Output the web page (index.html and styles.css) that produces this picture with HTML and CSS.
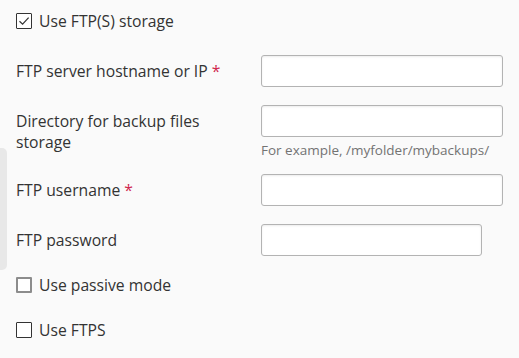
FILE: index.html
```html
<!DOCTYPE html>
<html lang="en">
<head>
    <meta charset="UTF-8">
    <title>FTP storage settings</title>
    <link rel="stylesheet" href="styles.css">
</head>
<body>
    <!-- Side handle -->
    <div class="side-handle"></div>

    <div class="settings">
        <!-- Enable FTP -->
        <label class="check-row first">
            <span class="box checked">
                <svg width="14" height="14" viewBox="0 0 14 14"><path d="M2.5 7.2 L5.6 10.2 L11.6 3.6" fill="none" stroke="#333" stroke-width="1.2"/></svg>
            </span>
            <span>Use FTP(S) storage</span>
        </label>

        <!-- Fields -->
        <div class="field">
            <label class="field-label" for="ftp-host">FTP server hostname or IP <span class="req">*</span></label>
            <div class="field-control">
                <input type="text" id="ftp-host" class="text-input">
            </div>
        </div>

        <div class="field">
            <label class="field-label" for="ftp-dir">Directory for backup files storage</label>
            <div class="field-control">
                <input type="text" id="ftp-dir" class="text-input">
                <div class="hint">For example, /myfolder/mybackups/</div>
            </div>
        </div>

        <div class="field">
            <label class="field-label" for="ftp-user">FTP username <span class="req">*</span></label>
            <div class="field-control">
                <input type="text" id="ftp-user" class="text-input">
            </div>
        </div>

        <div class="field">
            <label class="field-label" for="ftp-pass">FTP password</label>
            <div class="field-control">
                <input type="password" id="ftp-pass" class="text-input short">
            </div>
        </div>

        <!-- Options -->
        <label class="check-row passive">
            <span class="box hover"></span>
            <span>Use passive mode</span>
        </label>

        <label class="check-row ftps">
            <span class="box"></span>
            <span>Use FTPS</span>
        </label>
    </div>
</body>
</html>
```

FILE: styles.css
```css
/* General Styles */
* {
    margin: 0;
    padding: 0;
    box-sizing: border-box;
}

body {
    font-family: 'Open Sans', Arial, sans-serif;
    font-size: 15.7px;
    color: #333;
    background: #fafafa;
    width: 519px;
    height: 358px;
    overflow: hidden;
    position: relative;
}

.side-handle {
    position: absolute;
    left: 0;
    top: 148px;
    width: 7px;
    height: 122px;
    background: #e8e8e8;
    border-radius: 0 5px 5px 0;
}

.settings {
    padding: 0 16px;
}

/* Checkbox rows */
.check-row {
    display: flex;
    align-items: center;
    gap: 7px;
    height: 16px;
    line-height: 20px;
}

.check-row.first {
    margin-top: 13px;
    margin-bottom: 26px;
}

.check-row.passive {
    margin-top: 21px;
}

.check-row.ftps {
    margin-top: 29px;
}

.box {
    width: 16px;
    height: 16px;
    flex-shrink: 0;
    border: 1px solid #333;
    border-radius: 1px;
    background: #fff;
    display: flex;
    align-items: center;
    justify-content: center;
}

.box.hover {
    border: 2px solid #8c8c8c;
}

/* Fields */
.field {
    display: flex;
    align-items: flex-start;
    margin-bottom: 18px;
}

.field:nth-of-type(4) {
    margin-bottom: 0;
}

.field-label {
    width: 245px;
    padding: 6px 15px 0 0;
    line-height: 21px;
}

.req {
    color: #d0284d;
}

.field-control {
    flex: 1;
}

.text-input {
    display: block;
    width: 242px;
    height: 32px;
    border: 1px solid #b3b3b3;
    border-radius: 3px;
    background: #fff;
    box-shadow: inset 0 1px 2px rgba(0, 0, 0, 0.08);
    font-family: inherit;
    font-size: 14px;
    padding: 0 8px;
}

.text-input.short {
    width: 221px;
}

.hint {
    margin-top: 5px;
    margin-bottom: -2px;
    font-size: 13.5px;
    line-height: 16px;
    color: #737373;
}
```
